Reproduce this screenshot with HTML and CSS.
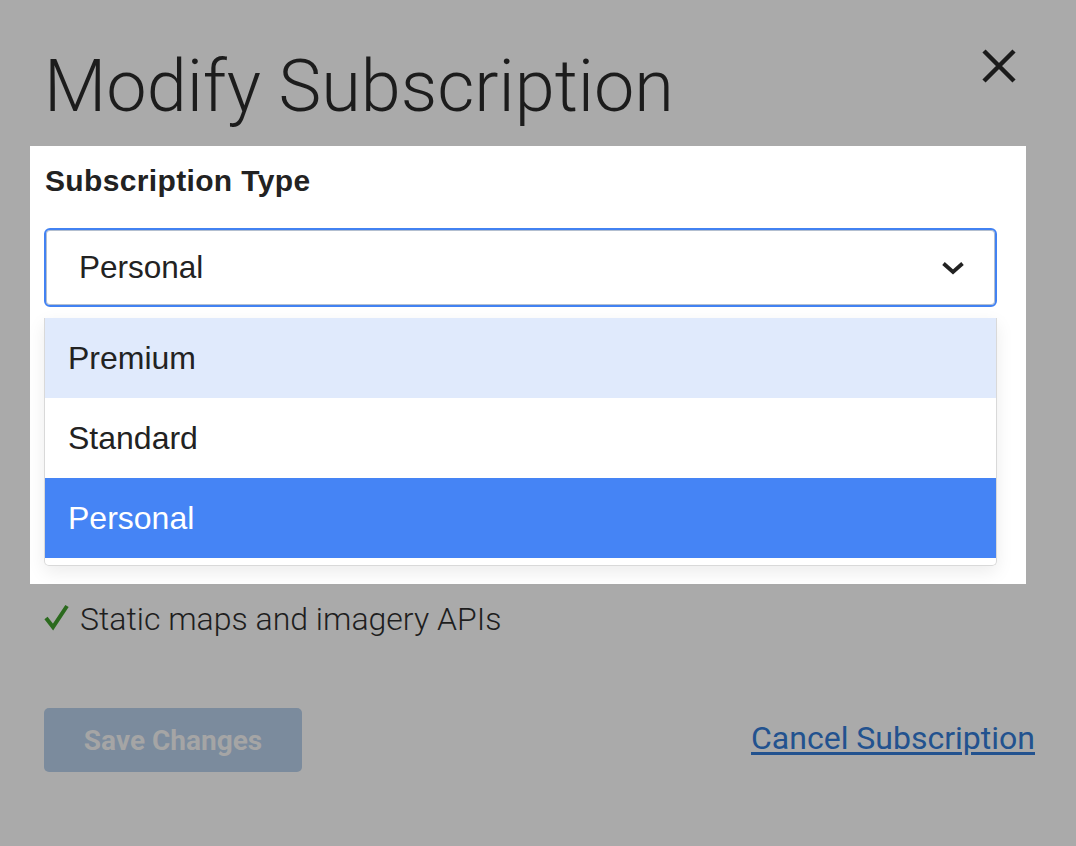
FILE: index.html
```html
<!doctype html>
<html>
<head>
<meta charset="utf-8">
<title>Modify Subscription</title>
<link rel="stylesheet" href="styles.css">
</head>
<body>
<div class="modal">
	<div class="head">
		<h1 class="title">Modify Subscription</h1>
		<a href="javascript:;" class="close">
			<svg width="34" height="34" viewBox="0 0 34 34"><path d="M2 2L32 32M32 2L2 32" stroke="#1b1b1b" stroke-width="4.5" fill="none"/></svg>
		</a>
	</div>

	<div class="panel">
		<div class="label">Subscription Type</div>
		<div class="select">
			<span>Personal</span>
			<svg width="24" height="16" viewBox="0 0 24 16"><path d="M2.5 3.5L12 12L21.5 3.5" stroke="#222" stroke-width="3.8" fill="none"/></svg>
		</div>
		<ul class="options">
			<li class="hover">Premium</li>
			<li>Standard</li>
			<li class="active">Personal</li>
		</ul>
	</div>

	<div class="feature">
		<svg width="26" height="28" viewBox="0 0 26 28"><path d="M2 15L9 24L23 3" stroke="#2b6a1e" stroke-width="4" fill="none"/></svg>
		<span>Static maps and imagery APIs</span>
	</div>

	<div class="foot">
		<button class="save" disabled>Save Changes</button>
		<a href="javascript:;" class="cancel">Cancel Subscription</a>
	</div>
</div>
</body>
</html>
```

FILE: styles.css
```css
*{ margin:0; padding:0; list-style:none;}
body{ background:#aaaaaa; font-family:Roboto, "Liberation Sans", sans-serif; color:#1c1c1c;}

.modal{ width:1076px; height:846px;}

.head{ display:flex; justify-content:space-between; align-items:flex-start; padding:47px 60px 0 44px;}
.title{ font-size:72px; line-height:80px; font-weight:300; color:#1c1c1c;}
.close{ display:block; margin-top:2px;}
.close svg{ display:block;}

.panel{ width:953px; margin:19px 0 0 30px; padding:18px 29px 18px 14px; background:#fff; font-family:"Liberation Sans", Arial, sans-serif;}
.label{ font-size:30px; line-height:34px; font-weight:bold; color:#222; margin-left:1px; letter-spacing:.35px;}

.select{ height:75px; margin-top:30px; border:2px solid #4282f2; border-radius:6px; box-shadow:inset 0 0 0 1px #b3bfd0; display:flex; align-items:center; justify-content:space-between; padding:0 30px 0 33px; font-size:31.5px; color:#222;}
.select svg{ display:block;}

.options{ margin-top:11px; border:1px solid #d9d9d9; border-top:none; border-radius:0 0 5px 5px; padding-bottom:7px; box-shadow:0 6px 18px rgba(0,0,0,0.08);}
.options li{ height:80px; line-height:80px; padding-left:23px; font-size:32px; color:#222;}
.options li.hover{ background:#e0eafc;}
.options li.active{ background:#4584f5; color:#fff;}

.feature{ display:flex; align-items:center; margin:15px 0 0 44px; font-size:32px; line-height:40px; font-weight:300; color:#1e1e1e;}
.feature svg{ display:block; margin-right:10px; margin-top:-4px;}

.foot{ display:flex; justify-content:space-between; align-items:center; margin-top:69px; padding:0 41px 0 44px;}
.save{ width:258px; height:64px; border:none; border-radius:5px; background:#7b8b9d; color:#a5a5a5; font-family:Roboto, sans-serif; font-size:28px; font-weight:bold;}
.cancel{ font-size:32px; color:#22528f; text-decoration:underline; text-underline-offset:3px; margin-top:-4px;}
```
